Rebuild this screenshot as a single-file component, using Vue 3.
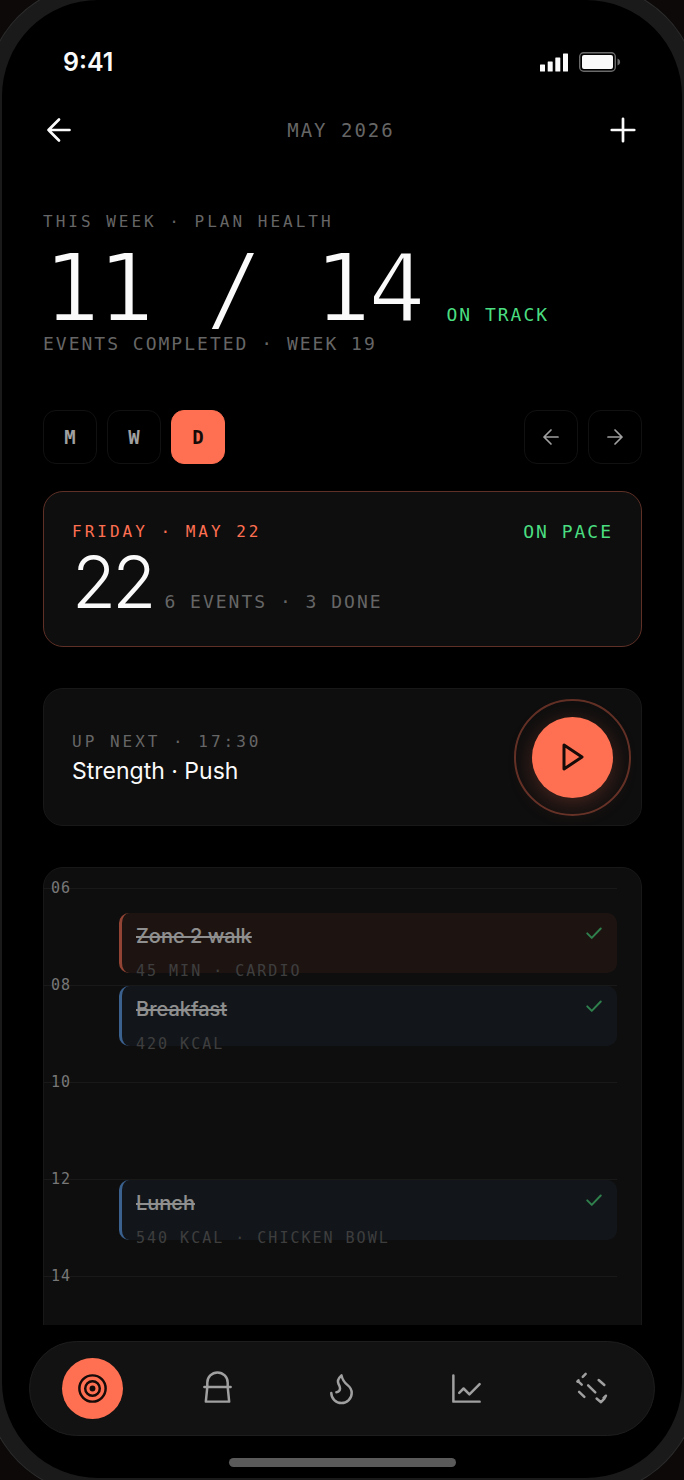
<template>
  <div class="stage">
    <div class="device">
      <div class="statusbar">
        <span class="clock">9:41</span>
        <div class="status-icons">
          <svg
            class="signal"
            viewBox="0 0 28 20"
            aria-hidden="true"
          >
            <rect x="0" y="12.5" width="5" height="7" rx="0.5" />
            <rect x="7.7" y="9.5" width="5" height="10" rx="0.5" />
            <rect x="15.3" y="5.5" width="5" height="14" rx="0.5" />
            <rect x="23" y="1.5" width="5" height="18" rx="0.5" />
          </svg>
          <svg
            class="battery"
            viewBox="0 0 42 20"
            aria-hidden="true"
          >
            <rect class="battery-case" x="0.7" y="0.7" width="35.6" height="18.6" rx="4" />
            <rect class="battery-fill" x="3" y="3" width="31" height="14" rx="2" />
            <path class="battery-nub" d="M38.5 6.5c2 .8 2.6 2 2.6 3.5s-.6 2.7-2.6 3.5z" />
          </svg>
        </div>
      </div>

      <header class="topbar">
        <button
          type="button"
          class="icon-button"
          aria-label="Back"
        >
          <svg viewBox="0 0 24 24"><path d="M19 12H5M12 19l-7-7 7-7" /></svg>
        </button>
        <h1 class="month">MAY 2026</h1>
        <button
          type="button"
          class="icon-button"
          aria-label="Add event"
        >
          <svg viewBox="0 0 24 24"><path d="M4.5 12h15M12 4.5v15" /></svg>
        </button>
      </header>

      <main class="content">
        <section class="summary">
          <p class="eyebrow">THIS WEEK · PLAN HEALTH</p>
          <div class="score-row">
            <span class="score">11 / 14</span>
            <span class="label good">ON TRACK</span>
          </div>
          <p class="label">EVENTS COMPLETED · WEEK 19</p>
        </section>

        <div class="controls">
          <div class="group">
            <button
              v-for="view in views"
              :key="view"
              type="button"
              class="square"
              :class="{ active: view === activeView }"
              :aria-pressed="view === activeView"
              @click="activeView = view"
            >
              {{ view }}
            </button>
          </div>
          <div class="group">
            <button
              type="button"
              class="square"
              aria-label="Previous day"
            >
              <svg viewBox="0 0 24 24"><path d="M19 12H5M12 19l-7-7 7-7" /></svg>
            </button>
            <button
              type="button"
              class="square"
              aria-label="Next day"
            >
              <svg viewBox="0 0 24 24"><path d="M5 12h14M12 5l7 7-7 7" /></svg>
            </button>
          </div>
        </div>

        <section class="card day-card">
          <div class="day-head">
            <span class="eyebrow accent">FRIDAY · MAY 22</span>
            <span class="label good">ON PACE</span>
          </div>
          <div class="day-row">
            <span class="day-number">22</span>
            <span class="label">6 EVENTS · 3 DONE</span>
          </div>
        </section>

        <section class="card next-card">
          <div>
            <p class="eyebrow">UP NEXT · 17:30</p>
            <h2 class="next-title">Strength · Push</h2>
          </div>
          <button
            type="button"
            class="play"
            aria-label="Start Strength · Push"
          >
            <svg viewBox="0 0 24 24"><path d="M6 4l12 8-12 8z" /></svg>
          </button>
        </section>

        <section class="card schedule">
          <div
            v-for="slot in slots"
            :key="slot.hour"
            class="slot"
          >
            <span class="hour">{{ slot.hour }}</span>
            <article
              v-if="slot.event"
              class="event"
              :class="[slot.event.kind, { late: slot.event.halfPast }]"
            >
              <div>
                <h3 class="event-title">{{ slot.event.title }}</h3>
                <p class="event-meta">{{ slot.event.meta }}</p>
              </div>
              <svg
                class="check"
                viewBox="0 0 24 24"
                aria-label="Done"
              >
                <path d="M3 12.5l6 6L21 6" />
              </svg>
            </article>
          </div>
        </section>
      </main>

      <nav class="tabbar">
        <button
          v-for="tab in tabs"
          :key="tab.name"
          type="button"
          class="tab"
          :class="{ active: tab.name === activeTab }"
          :aria-label="tab.name"
          @click="activeTab = tab.name"
        >
          <span class="tab-icon">
            <svg viewBox="0 0 24 24">
              <path :d="tab.path" />
              <circle
                v-if="tab.dot"
                class="dot"
                cx="12"
                cy="12"
                r="2"
              />
            </svg>
          </span>
        </button>
      </nav>
      <div class="home-indicator"></div>
    </div>
  </div>
</template>

<script setup>
import { ref } from "vue";

const views = ["M", "W", "D"];
const activeView = ref("D");
const activeTab = ref("Plan");

const slots = [
  {
    hour: "06",
    event: { title: "Zone 2 walk", meta: "45 MIN · CARDIO", kind: "cardio", halfPast: true },
  },
  { hour: "08", event: { title: "Breakfast", meta: "420 KCAL", kind: "meal" } },
  { hour: "10" },
  {
    hour: "12",
    event: { title: "Lunch", meta: "540 KCAL · CHICKEN BOWL", kind: "meal" },
  },
  { hour: "14" },
];

const tabs = [
  {
    name: "Plan",
    path: "M3 12a9 9 0 1 0 18 0a9 9 0 1 0-18 0M7 12a5 5 0 1 0 10 0a5 5 0 1 0-10 0",
    dot: true,
  },
  { name: "Gear", path: "M5 11V8a7 7 0 0 1 14 0v3M3 11h18M5 11l-1 10h16l-1-10" },
  {
    name: "Energy",
    path: "M8.5 14.5A2.5 2.5 0 0 0 11 12c0-1.38-.5-2-1-3-1.072-2.143-.224-4.054 2-6 .5 2.5 2 4.9 4 6.5 2 1.6 3 3.5 3 5.5a7 7 0 1 1-14 0",
  },
  { name: "Trends", path: "M3 3v18h18M7 15l3-3 4 4 7-7" },
  {
    name: "Workouts",
    path: "M8 2L6 4M2.3 7.3l.8-1v1l2.2 2M3.5 14.3l3.6 3.4M9.7 9.9l4.9 4.8M16.9 6.2l3.9 3.4M15.5 18.9l3 2.5 2.3-2.5 1.1-2-1.6 1.5",
  },
];
</script>

<style>
body {
  margin: 0;
  background: #0c0908;
}
</style>

<style scoped>
* {
  box-sizing: border-box;
}

h1,
h2,
h3,
p {
  margin: 0;
  font-weight: 400;
}

button {
  padding: 0;
  border: 0;
  background: none;
  color: inherit;
  cursor: pointer;
}

svg {
  display: block;
  fill: none;
  stroke: currentColor;
  stroke-linecap: round;
  stroke-linejoin: round;
}

.stage {
  height: 100vh;
  overflow: hidden;
  font-family: Inter, "Liberation Sans", sans-serif;
  color: #fafafa;
}

/* the bezel runs past the window on every side */
.device {
  display: flex;
  flex-direction: column;
  height: calc(100vh + 30px);
  margin: -16px -14px 0;
  border: 16px solid #1a1a1a;
  border-radius: 112px;
  background: #000;
  box-shadow: 0 0 0 1px #2c2c2c;
}

.statusbar {
  display: flex;
  flex-shrink: 0;
  justify-content: space-between;
  align-items: center;
  height: 44px;
  margin-top: 40px;
  padding: 0 61px;
}

.clock {
  font-size: 25px;
  font-weight: 600;
}

.status-icons {
  display: flex;
  align-items: center;
  gap: 11px;
}

.signal {
  width: 28px;
  height: 20px;
  fill: #fafafa;
  stroke: none;
}

.battery {
  width: 42px;
  height: 20px;
}

.battery-case {
  stroke: #6a6a6a;
  stroke-width: 1.4;
}

.battery-fill {
  fill: #fafafa;
  stroke: none;
}

.battery-nub {
  fill: #6a6a6a;
  stroke: none;
}

.topbar {
  display: flex;
  flex-shrink: 0;
  justify-content: space-between;
  align-items: center;
  height: 52px;
  margin-top: 20px;
  padding: 0 41px 0 39px;
}

.icon-button svg {
  width: 36px;
  height: 36px;
  stroke-width: 1.8;
}

.month,
.label,
.eyebrow,
.hour,
.event-meta,
.square {
  font-family: "DejaVu Sans Mono", "Liberation Mono", monospace;
}

.month {
  color: #666;
  font-size: 19px;
  letter-spacing: 2px;
}

.content {
  flex: 1;
  min-height: 0;
  overflow: hidden;
  margin-top: 54px;
  padding: 0 40px 0 41px;
}

.eyebrow {
  color: #666;
  font-size: 16px;
  line-height: 24px;
  letter-spacing: 3px;
}

.label {
  color: #666;
  font-size: 18px;
  line-height: 24px;
  letter-spacing: 2px;
}

.accent {
  color: #ff7052;
}

.good {
  color: #4ade80;
}

.score-row {
  display: flex;
  align-items: baseline;
  gap: 24px;
  padding-top: 10px;
}

.score {
  font-family: "DejaVu Sans Mono", "Liberation Mono", monospace;
  font-size: 95px;
  line-height: 88px;
  letter-spacing: -3px;
  white-space: pre;
  /* a background-coloured outline thins the strokes to a light weight */
  -webkit-text-stroke: 2px #000;
}

.controls {
  display: flex;
  justify-content: space-between;
  margin-top: 54px;
}

.group {
  display: flex;
  gap: 10px;
}

.square {
  display: flex;
  justify-content: center;
  align-items: center;
  width: 54px;
  height: 54px;
  border: 1px solid #111;
  border-radius: 13px;
  color: #a0a0a0;
  font-size: 19px;
  font-weight: 700;
}

.square.active {
  border-color: #ff7052;
  background: #ff7052;
  color: #160b08;
}

.square svg {
  width: 24px;
  height: 24px;
  stroke-width: 1.7;
}

.card {
  border: 1px solid #181818;
  border-radius: 20px;
  background: #0e0e0e;
}

.day-card {
  height: 156px;
  margin-top: 27px;
  padding: 28px;
  border-color: #5e3026;
}

.day-head {
  display: flex;
  justify-content: space-between;
}

.day-row {
  display: flex;
  align-items: baseline;
  gap: 12px;
}

.day-number {
  font-size: 72px;
  font-weight: 300;
  line-height: 76px;
  letter-spacing: -4px;
}

.next-card {
  display: flex;
  justify-content: space-between;
  align-items: center;
  height: 138px;
  margin-top: 41px;
  padding: 0 28px;
}

.next-card .eyebrow {
  padding-top: 4px;
}

.next-title {
  font-size: 23px;
  line-height: 34px;
}

.play {
  position: relative;
  display: flex;
  justify-content: center;
  align-items: center;
  width: 81px;
  height: 81px;
  border-radius: 50%;
  background: #ff7052;
  color: #160b08;
  box-shadow: 0 6px 24px rgba(255, 112, 82, 0.25);
}

.play::before {
  content: "";
  position: absolute;
  inset: -18px;
  border: 2px solid rgba(255, 112, 82, 0.35);
  border-radius: 50%;
}

.play svg {
  width: 36px;
  height: 36px;
  stroke-width: 2;
}

.schedule {
  margin-top: 41px;
  padding: 20px 24px 0 0;
}

.slot {
  position: relative;
  height: 97px;
  padding-left: 75px;
  border-top: 1px solid #191919;
}

.hour {
  position: absolute;
  top: -11px;
  left: 7px;
  color: #777;
  font-size: 15px;
  line-height: 20px;
  letter-spacing: 1px;
}

.event {
  display: flex;
  justify-content: space-between;
  height: 60px;
  padding: 11px 14px;
  border-left: 3px solid;
  border-radius: 10px;
  opacity: 0.55;
}

.event.late {
  position: relative;
  top: 24px;
}

.event.cardio {
  border-color: #ff7052;
  background: rgba(255, 112, 82, 0.12);
}

.event.meal {
  border-color: #60a5fa;
  background: rgba(96, 165, 250, 0.1);
}

.event-title {
  font-size: 20px;
  font-weight: 500;
  line-height: 24px;
  text-decoration: line-through;
}

.event-meta {
  margin-top: 12px;
  color: #666;
  font-size: 15px;
  line-height: 22px;
  letter-spacing: 2px;
  white-space: nowrap;
}

.check {
  width: 18px;
  height: 18px;
  color: #4ade80;
  stroke-width: 2.6;
}

.tabbar {
  display: grid;
  grid-template-columns: repeat(5, 1fr);
  flex-shrink: 0;
  align-items: center;
  height: 95px;
  margin: 16px 27px 0;
  border: 1px solid #1d1d1d;
  border-radius: 48px;
  background: #121212;
}

.tab {
  display: flex;
  justify-content: center;
  color: #a0a0a0;
}

.tab-icon {
  display: flex;
  justify-content: center;
  align-items: center;
  width: 61px;
  height: 61px;
  border-radius: 50%;
}

.tab.active .tab-icon {
  background: #ff7052;
  color: #160b08;
}

.tab svg {
  width: 35px;
  height: 35px;
  stroke-width: 1.7;
}

.dot {
  fill: currentColor;
  stroke: none;
}

.home-indicator {
  flex-shrink: 0;
  width: 227px;
  height: 9px;
  margin: 22px auto 11px;
  border-radius: 5px;
  background: #5a5a5a;
}
</style>
